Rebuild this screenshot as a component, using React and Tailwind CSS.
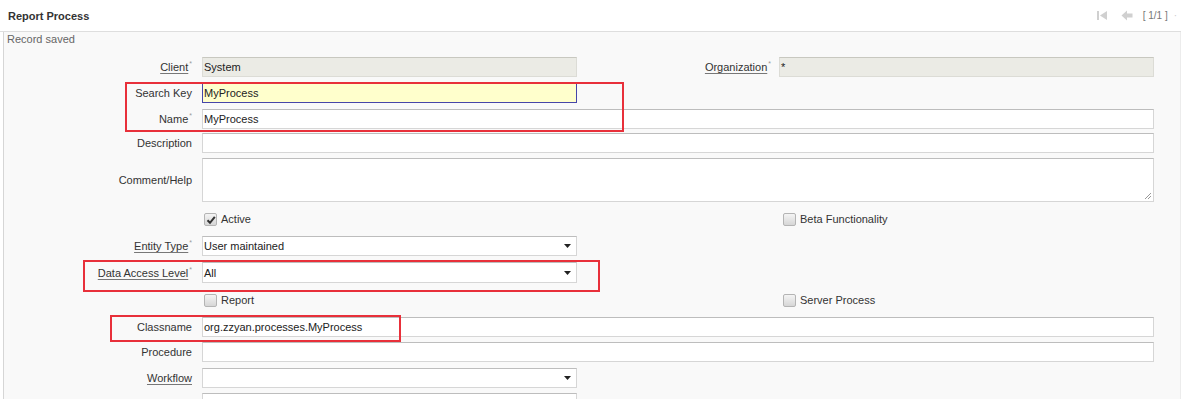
import React from "react";

const Req = () => <span className="ml-[1px] align-top text-[7px] leading-[8px] text-[#999]">*</span>;

function Label({ text, link, req, pr = "pr-[6px]" }) {
    return (
        <div className={`text-right ${pr} whitespace-nowrap text-[#333]`}>
            <span className={link ? "underline underline-offset-[2px] decoration-[#777]" : ""}>{text}</span>
            {req && <Req />}
        </div>
    );
}

function Field({ value = "", kind = "normal", select, className = "" }) {
    const styles = {
        normal: "bg-white border-[#d6d6d6] border-t-[#bdbdbd]",
        disabled: "bg-[#ebebe5] border-[#dcdcd6] border-t-[#c8c8c0]",
        focus: "bg-[#ffffcc] border-[#4646a8]",
    };
    return (
        <div className={`relative flex items-center h-full border pl-[1px] text-[11px] text-[#222] ${styles[kind]} ${className}`}>
            <span className="whitespace-nowrap">{value}</span>
            {select && (
                <svg className="absolute right-[5px] top-1/2 -translate-y-1/2" width="7" height="4" viewBox="0 0 7 4">
                    <path d="M0 0 L7 0 L3.5 4 Z" fill="#222" />
                </svg>
            )}
        </div>
    );
}

function Checkbox({ checked, label, className = "" }) {
    return (
        <div className={`flex items-center gap-[4px] ${className}`}>
            <div className="relative w-[13px] h-[13px] rounded-[2px] border border-[#b4b4b4] bg-gradient-to-b from-[#f4f4f4] to-[#d6d6d6]">
                {checked && (
                    <svg className="absolute left-[1px] top-[1px]" width="10" height="10" viewBox="0 0 10 10">
                        <path d="M1.5 5.2 L4 7.8 L8.8 1.8" stroke="#333" strokeWidth="2" fill="none" />
                    </svg>
                )}
            </div>
            <span className="text-[#333]">{label}</span>
        </div>
    );
}

const grid = "grid grid-cols-[194px_375px_194px_375px] gap-x-[4px] items-center";

export default function App() {
    return (
        <div className="relative w-[1184px] h-[399px] overflow-hidden bg-white text-[11px] leading-[14px] text-[#333] font-['Liberation_Sans',Arial,sans-serif]">
            <header className="h-[32px] flex items-center justify-between pl-[8px] pr-[4px] border-b border-[#dedede] bg-white mr-[3px]">
                <span className="font-bold text-[#333]">Report Process</span>
                <div className="flex items-center text-[#aaa] text-[10px]">
                    <svg width="12" height="11" viewBox="0 0 12 11" className="mr-[13px]">
                        <rect x="1" y="1" width="2" height="9" fill="#d0d0d0" />
                        <path d="M11 1 L4 5.5 L11 10 Z" fill="#d0d0d0" />
                    </svg>
                    <svg width="12" height="11" viewBox="0 0 12 11" className="mr-[10px]">
                        <path d="M0.5 5.5 L6 0.5 L6 3.5 L11.5 3.5 L11.5 7.5 L6 7.5 L6 10.5 Z" fill="#d0d0d0" />
                    </svg>
                    <span className="text-[#777]">[ 1/1 ]</span>
                    <span className="ml-[6px] text-[#ccc]">·</span>
                </div>
            </header>

            <div className="ml-[3px] mr-[3px] h-[367px] border-l border-r border-[#d6d6d6] border-r-[#ececec] bg-[#f9f9f9]">
                <div className="pl-[3px] text-[#666] leading-[14px]">Record saved</div>

                <div className="flex flex-col mt-[11px]">
                    <div className={`${grid} h-[20px]`}>
                        <Label text="Client" link req />
                        <Field value="System" kind="disabled" />
                        <Label text="Organization" link req pr="pr-[4px]" />
                        <Field value="*" kind="disabled" />
                    </div>

                    <div className={`${grid} h-[20px] mt-[6px]`}>
                        <Label text="Search Key" />
                        <Field value="MyProcess" kind="focus" />
                    </div>

                    <div className={`${grid} h-[20px] mt-[6px]`}>
                        <Label text="Name" req />
                        <Field value="MyProcess" className="col-span-3" />
                    </div>

                    <div className={`${grid} h-[20px] mt-[4px]`}>
                        <Label text="Description" />
                        <Field className="col-span-3" />
                    </div>

                    <div className={`${grid} h-[44px] mt-[5px]`}>
                        <Label text="Comment/Help" />
                        <div className="relative col-span-3 h-full border bg-white border-[#d6d6d6] border-t-[#bdbdbd]">
                            <svg className="absolute right-[1px] bottom-[1px]" width="8" height="8" viewBox="0 0 8 8">
                                <path d="M7 1 L1 7 M7 4 L4 7" stroke="#999" strokeWidth="1" />
                            </svg>
                        </div>
                    </div>

                    <div className={`${grid} h-[22px] mt-[6px]`}>
                        <div />
                        <Checkbox checked label="Active" className="pl-[2px]" />
                        <div />
                        <Checkbox label="Beta Functionality" className="pl-[4px]" />
                    </div>

                    <div className={`${grid} h-[20px] mt-[6px]`}>
                        <Label text="Entity Type" link req />
                        <Field value="User maintained" select />
                    </div>

                    <div className={`${grid} h-[21px] mt-[6px]`}>
                        <Label text="Data Access Level" link req />
                        <Field value="All" select />
                    </div>

                    <div className={`${grid} h-[22px] mt-[6px]`}>
                        <div />
                        <Checkbox label="Report" className="pl-[2px]" />
                        <div />
                        <Checkbox label="Server Process" className="pl-[4px]" />
                    </div>

                    <div className={`${grid} h-[20px] mt-[6px]`}>
                        <Label text="Classname" />
                        <Field value="org.zzyan.processes.MyProcess" className="col-span-3" />
                    </div>

                    <div className={`${grid} h-[20px] mt-[5px]`}>
                        <Label text="Procedure" />
                        <Field className="col-span-3" />
                    </div>

                    <div className={`${grid} h-[20px] mt-[6px]`}>
                        <Label text="Workflow" link />
                        <Field select />
                    </div>

                    <div className={`${grid} h-[20px] mt-[5px]`}>
                        <div />
                        <Field />
                    </div>
                </div>
            </div>

            {/* red annotation boxes */}
            <div className="absolute left-[125px] top-[82px] w-[499px] h-[50px] border-2 border-[#e8303a] pointer-events-none" />
            <div className="absolute left-[83px] top-[260px] w-[517px] h-[32px] border-2 border-[#e8303a] pointer-events-none" />
            <div className="absolute left-[110px] top-[315px] w-[291px] h-[27px] border-2 border-[#e8303a] pointer-events-none" />
        </div>
    );
}
